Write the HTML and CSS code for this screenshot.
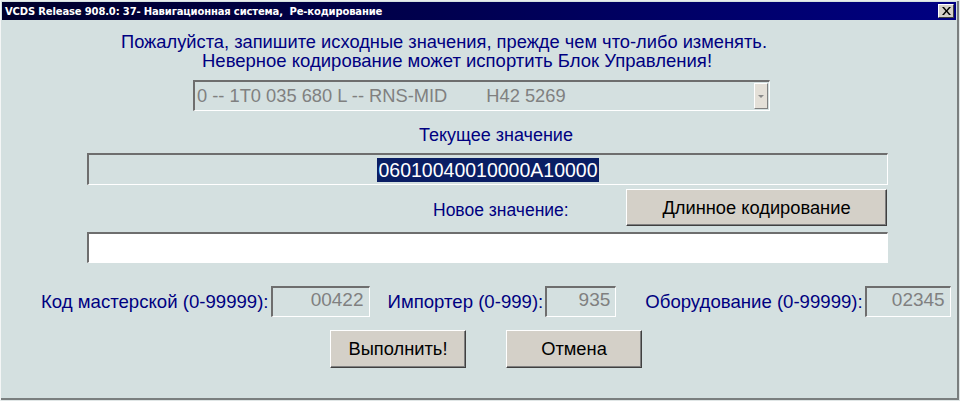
FILE: index.html
```html
<!DOCTYPE html>
<html lang="ru">
<head>
<meta charset="utf-8">
<title>VCDS</title>
<link rel="stylesheet" href="styles.css">
</head>
<body>
<div class="window">
  <div class="titlebar">
    <span class="title">VCDS Release 908.0: 37- Навигационная система,&nbsp; Ре-кодирование</span>
    <span class="close">
      <svg width="9" height="8" viewBox="0 0 9 8"><path d="M0 0h2l2.5 3 2.5-3h2L5.5 4 9 8H7L4.5 5 2 8H0l3.5-4z" fill="#000"/></svg>
    </span>
  </div>
  <div class="content">
    <p class="msg msg1">Пожалуйста, запишите исходные значения, прежде чем что-либо изменять.</p>
    <p class="msg msg2">Неверное кодирование может испортить Блок Управления!</p>
    <div class="combo">
      <span class="combo-text">0 -- 1T0 035 680 L -- RNS-MID</span>
      <span class="combo-text combo-sw">H42 5269</span>
      <span class="combo-btn"><span class="tri"></span></span>
    </div>
    <div class="label cur-label">Текущее значение</div>
    <div class="field cur"><span class="sel">06010040010000A10000</span></div>
    <div class="newrow">
      <span class="label new-label">Новое значение:</span>
      <button class="btn long">Длинное кодирование</button>
    </div>
    <div class="field new"></div>
    <div class="codes">
      <span class="code-label">Код мастерской (0-99999):</span>
      <span class="box w1">00422</span>
      <span class="code-label l2">Импортер (0-999):</span>
      <span class="box w2">935</span>
      <span class="code-label l3">Оборудование (0-99999):</span>
      <span class="box w3">02345</span>
    </div>
    <div class="actions">
      <button class="btn act">Выполнить!</button>
      <button class="btn act">Отмена</button>
    </div>
  </div>
</div>
</body>
</html>
```
FILE: styles.css
```css
html, body {
  margin: 0;
  padding: 0;
  background: #d4e0e0;
}
body {
  width: 960px;
  height: 401px;
  overflow: hidden;
  font-family: "Liberation Sans", Arial, sans-serif;
}
.window {
  width: 960px;
  height: 401px;
  box-sizing: border-box;
  border-top: 1px solid #e8ecec;
  border-left: 1px solid #f4f6f6;
  border-right: 1px solid #e0e6e6;
  border-bottom: 1px solid #e0e6e6;
  box-shadow: inset -2px -2px 0 #7a7f7f;
  display: flex;
  flex-direction: column;
}
.titlebar {
  height: 18px;
  margin: 1px 3px 0 1px;
  background: linear-gradient(to right, #00002c 0%, #00004e 45%, #000082 100%);
  display: flex;
  align-items: center;
  justify-content: space-between;
  padding: 0 2px 0 3px;
}
.title {
  color: #fff;
  font-family: "DejaVu Sans", sans-serif;
  font-weight: bold;
  font-size: 10px;
  letter-spacing: -0.15px;
  white-space: nowrap;
}
.close {
  width: 16px;
  height: 14px;
  box-sizing: border-box;
  background: #d4d0c8;
  border-top: 1px solid #fff;
  border-left: 1px solid #fff;
  border-right: 1px solid #404040;
  border-bottom: 1px solid #404040;
  display: flex;
  align-items: center;
  justify-content: center;
}
.content {
  flex: 1;
}
.msg {
  margin: 0;
  font-size: 18.3px;
  line-height: 19px;
  color: #000080;
  white-space: nowrap;
}
.msg1 {
  margin-top: 12px;
  padding-left: 120px;
}
.msg2 {
  padding-left: 201px;
  font-size: 18.5px;
}
.combo {
  margin: 10px 0 0 192px;
  width: 577px;
  height: 31px;
  box-sizing: border-box;
  border-top: 2px solid #6e6e6e;
  border-left: 2px solid #6e6e6e;
  border-right: 1px solid #fff;
  border-bottom: 1px solid #fff;
  display: flex;
  align-items: center;
  color: #808080;
  font-size: 18.3px;
}
.combo-text {
  padding-left: 2px;
  white-space: nowrap;
}
.combo-sw {
  margin-left: 37px;
}
.combo-btn {
  margin-left: auto;
  margin-right: 1px;
  width: 14px;
  height: 26px;
  box-sizing: border-box;
  background: #e4e0d8;
  border-top: 1px solid #fff;
  border-left: 1px solid #fff;
  border-right: 1px solid #808080;
  border-bottom: 1px solid #808080;
  display: flex;
  align-items: center;
  justify-content: center;
}
.tri {
  width: 0;
  height: 0;
  border-left: 3px solid transparent;
  border-right: 3px solid transparent;
  border-top: 3px solid #8a8a8a;
}
.label {
  font-size: 18px;
  line-height: 19px;
  color: #000080;
  white-space: nowrap;
}
.cur-label {
  margin: 15px 0 0 418px;
}
.field {
  margin-left: 86px;
  width: 801px;
  box-sizing: border-box;
  border-top: 2px solid #6e6e6e;
  border-left: 2px solid #6e6e6e;
  border-right: 1px solid #fff;
  border-bottom: 1px solid #fff;
}
.cur {
  margin-top: 8px;
  height: 32px;
  display: flex;
  align-items: center;
  justify-content: center;
  font-size: 19.5px;
}
.sel {
  background: #0a1e64;
  color: #fff;
  padding: 0 1px;
  line-height: 24px;
}
.newrow {
  margin-top: 4px;
  display: flex;
  align-items: center;
  height: 37px;
}
.new-label {
  margin-left: 432px;
  padding-top: 6px;
  font-size: 17.5px;
}
.btn {
  font-family: "Liberation Sans", Arial, sans-serif;
  font-size: 18.3px;
  color: #000;
  background: #d4d0c8;
  box-sizing: border-box;
  border-top: 1px solid #fff;
  border-left: 1px solid #fff;
  border-right: 1px solid #404040;
  border-bottom: 1px solid #404040;
  box-shadow: inset -1px -1px 0 #808080;
  padding: 0;
  margin: 0;
}
.long {
  margin-left: auto;
  margin-right: 72px;
  width: 261px;
  height: 37px;
}
.new {
  margin-top: 6px;
  height: 31px;
  background: #fff;
}
.codes {
  margin-top: 23px;
  height: 31px;
  display: flex;
  align-items: center;
  padding-left: 40px;
}
.code-label {
  font-size: 18.6px;
  line-height: 20px;
  color: #000080;
  white-space: nowrap;
}
.box {
  height: 31px;
  box-sizing: border-box;
  border-top: 2px solid #6e6e6e;
  border-left: 2px solid #6e6e6e;
  border-right: 1px solid #fff;
  border-bottom: 1px solid #fff;
  color: #808080;
  font-size: 19px;
  line-height: 22px;
  text-align: right;
  padding: 1px 5px 0 0;
  margin-left: 2px;
}
.w1 { width: 99px; }
.w2 { width: 71px; }
.w3 { width: 86px; }
.l2 { margin-left: 18px; }
.l3 { margin-left: 29px; }
.actions {
  margin-top: 13px;
  display: flex;
  gap: 40px;
  padding-left: 329px;
}
.act {
  width: 136px;
  height: 38px;
}
```
